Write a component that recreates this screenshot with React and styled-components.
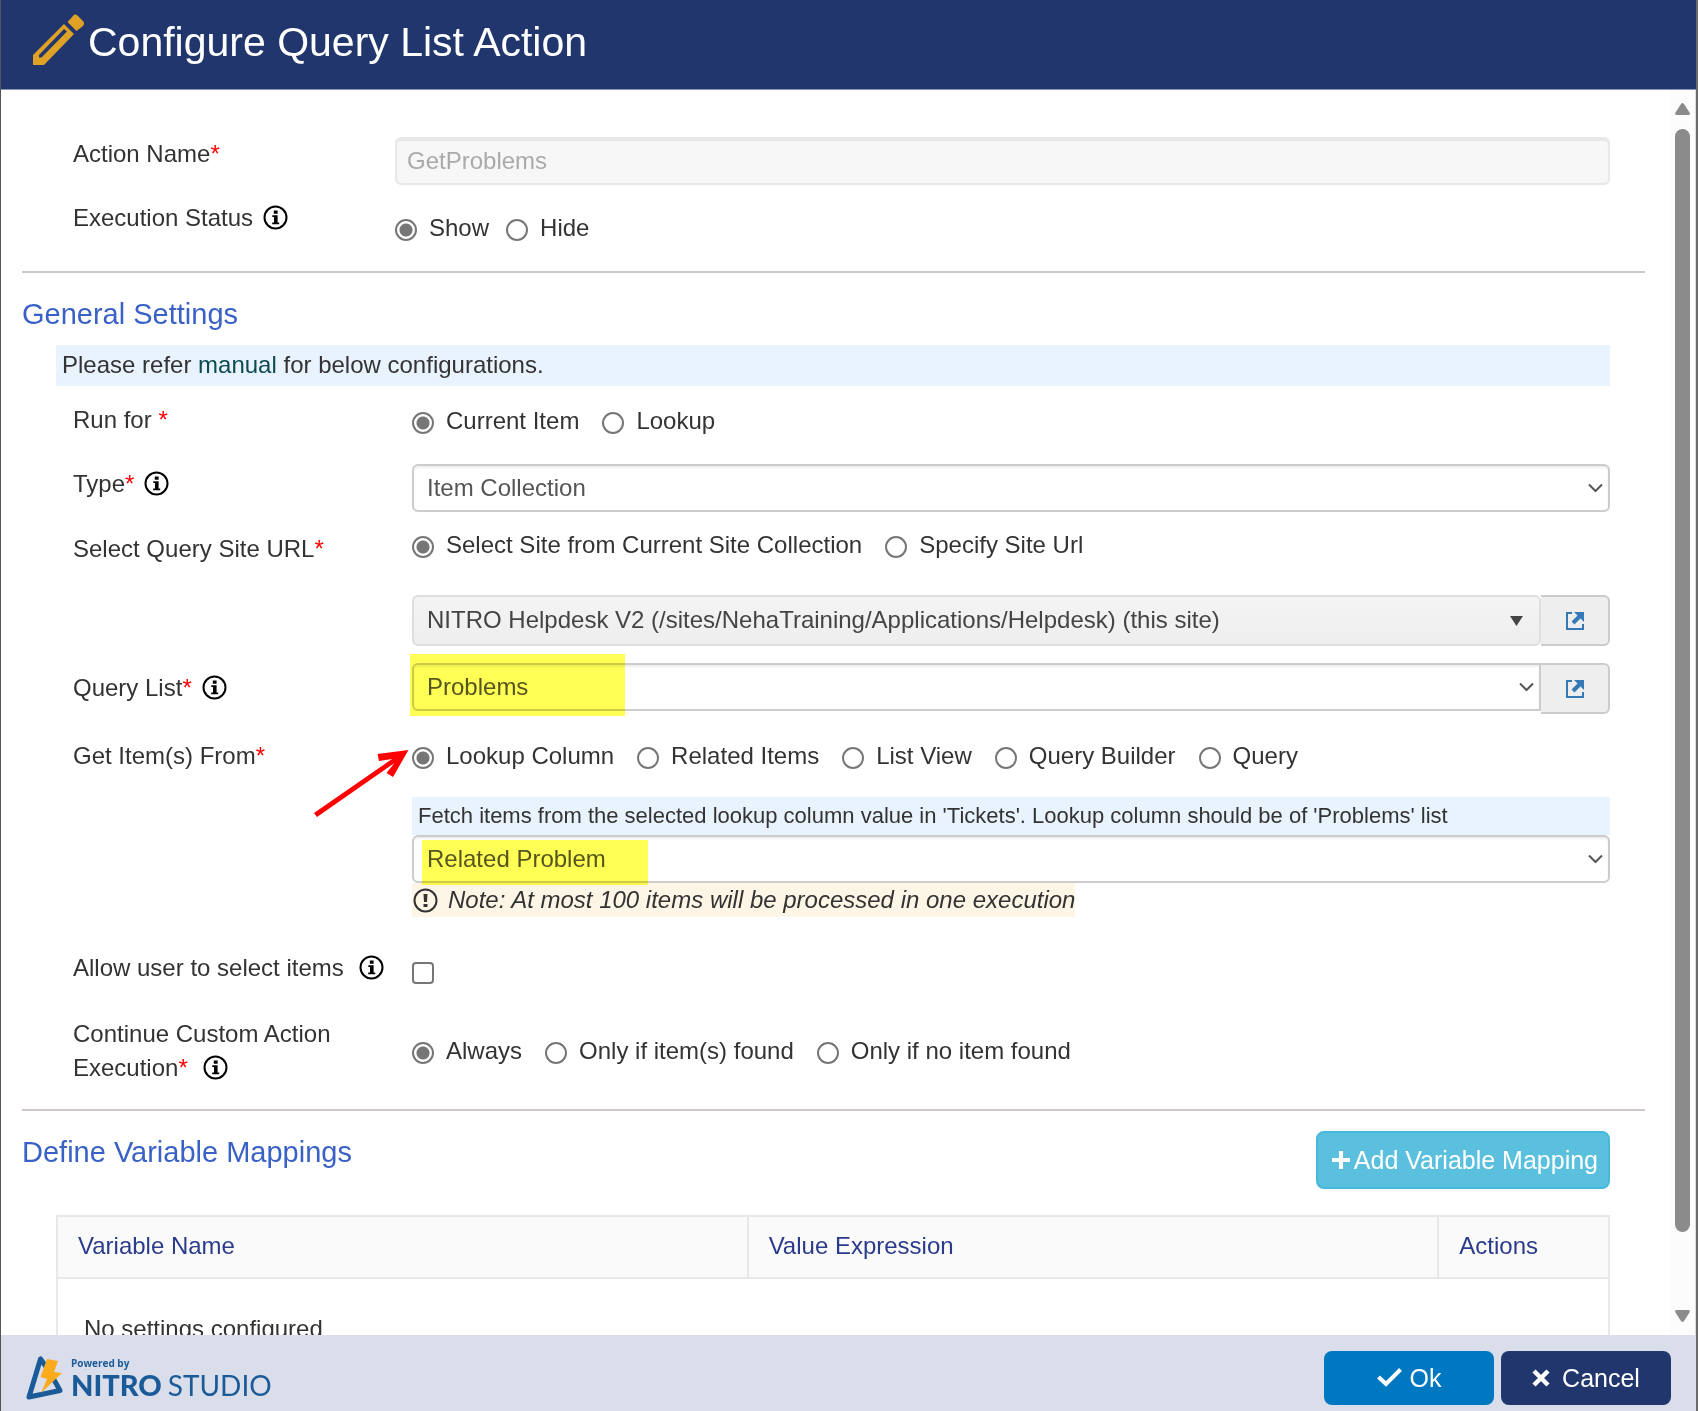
import React from "react";
import styled, { createGlobalStyle, css } from "styled-components";

const GlobalStyle = createGlobalStyle`
  *, *::before, *::after { box-sizing: border-box; }
  body {
    margin: 0;
    background: #fff;
    color: #333;
    font: 24px/34px "Liberation Sans", Arial, sans-serif;
  }
  input, select, button { font: inherit; margin: 0; }
`;

const Dialog = styled.div`
  height: 100vh;
  display: flex;
  flex-direction: column;
  border-left: 1px solid #555;
  border-right: 2px solid #6b6b6b;
`;

const Header = styled.header`
  display: flex;
  align-items: center;
  flex: none;
  height: 90px;
  padding: 0 0 6px 31px;
  background: #20366d;
  border-bottom: 1px solid #8c98b8;
  color: #fff;
`;

const PencilIcon = styled.svg`
  flex: none;
  margin-bottom: 4px;
`;

const Title = styled.h1`
  margin: 0 0 0 3px;
  font-size: 41px;
  line-height: 48px;
  font-weight: 400;
`;

const Main = styled.div`
  flex: 1;
  min-height: 0;
  display: flex;
`;

const Content = styled.main`
  flex: 1;
  min-width: 0;
  overflow-y: auto;
  scrollbar-width: none;
  padding: 47px 25px 0 21px;
`;

const ScrollTrack = styled.div`
  flex: none;
  width: 26px;
  display: flex;
  flex-direction: column;
  align-items: center;
  padding: 13px 0;
  background: #fcfcfc;
  border-right: 1px solid #ddd;
`;

const ScrollSpace = styled.div`
  flex: 1;
  width: 15px;
  margin: 14px 0 13px;
`;

const ScrollThumb = styled.div`
  height: calc(100% * 17 / 18);
  border-radius: 8px;
  background: #8b8b8b;
`;

const Rule = styled.hr`
  margin: ${(p) => p.$top}px 0 0;
  border: 0;
  height: 2px;
  background: #cfc8ca;
`;

const SectionTitle = styled.h2`
  margin: 0;
  padding-top: ${(p) => p.$top}px;
  font-size: 29px;
  line-height: 34px;
  font-weight: 400;
  color: #3a62c6;
`;

const Banner = styled.div`
  padding: 0 35px 0 34px;
`;

const Form = styled.div`
  padding: 0 35px 0 51px;
`;

const Row = styled.div`
  display: grid;
  grid-template-columns: ${(p) => p.$label || 339}px minmax(0, 1fr);
  margin-top: ${(p) => p.$gap || 0}px;
`;

const labelStyle = css`
  display: block;
  padding-top: ${(p) => p.$top || 0}px;
`;
const Label = styled.label`${labelStyle}`;
const Caption = styled.div`
  ${labelStyle}
  padding-right: 20px;
`;

const Required = styled.span`
  color: #f00;
`;

const Field = styled.div`
  padding-top: ${(p) => p.$top || 0}px;
`;

const Options = styled.div`
  display: flex;
  flex-wrap: wrap;
  gap: 0 ${(p) => p.$gap || 23}px;
`;

const Option = styled.label`
  display: flex;
  align-items: center;
  gap: 12px;
`;

const Radio = styled.input.attrs({ type: "radio" })`
  appearance: none;
  width: 22px;
  height: 22px;
  margin-top: 3px;
  border: 2px solid #767676;
  border-radius: 50%;
  background: #fff;
  &:checked {
    background: radial-gradient(circle, #767676 6px, #fff 7px);
  }
`;

const Checkbox = styled.input.attrs({ type: "checkbox" })`
  appearance: none;
  display: block;
  width: 22px;
  height: 22px;
  border: 2px solid #767676;
  border-radius: 4px;
  background: #fff;
`;

const TextBox = styled.input`
  display: block;
  width: 100%;
  height: 48px;
  padding: 0 12px 0 10px;
  border: 2px solid #e8e8e8;
  border-radius: 6px;
  background: #f7f7f7;
  box-shadow: inset 0 2px 1px #e6e6e6;
  color: #aaa;
`;

const SelectBox = styled.div`
  position: relative;
  flex: 1;
  min-width: 0;
`;

const Select = styled.select`
  appearance: none;
  display: block;
  width: 100%;
  height: ${(p) => (p.$shaded ? 51 : 48)}px;
  padding: 0 50px ${(p) => (p.$shaded ? 2 : 0)}px 13px;
  border: 2px solid ${(p) => (p.$shaded ? "#dedede" : "#ccc")};
  border-radius: ${(p) => (p.$joined ? "6px 0 0 6px" : "6px")};
  background: ${(p) => (p.$shaded ? "linear-gradient(#f4f4f4, #eee)" : "#fff")};
  box-shadow: ${(p) => (p.$shaded ? "none" : "inset 0 2px 2px #eee")};
  color: ${(p) => (p.$shaded ? "#444" : "#555")};
`;

const Caret = styled.svg`
  position: absolute;
  top: 50%;
  right: ${(p) => p.$right || 7}px;
  transform: translateY(-50%);
  pointer-events: none;
`;

const Highlight = styled.span`
  position: absolute;
  top: ${(p) => p.$top}px;
  left: ${(p) => p.$left}px;
  width: ${(p) => p.$width}px;
  height: ${(p) => p.$height}px;
  background: #ffff55;
  mix-blend-mode: multiply;
  pointer-events: none;
`;

const InputGroup = styled.div`
  display: flex;
  align-items: flex-start;
  margin-top: ${(p) => p.$gap || 0}px;
`;

const OpenLink = styled.a`
  flex: none;
  display: flex;
  align-items: center;
  justify-content: center;
  width: 69px;
  height: 51px;
  border: 2px solid #ccc;
  border-left: 0;
  border-radius: 0 6px 6px 0;
  background: #eee;
`;

const Hint = styled.p`
  margin: ${(p) => p.$gap}px 0 0;
  padding: 3px 6px 4px;
  background: #e9f3fe;
  font-size: ${(p) => (p.$small ? 22 : 24)}px;
  line-height: ${(p) => (p.$small ? 31 : 34)}px;
`;

const ManualLink = styled.a`
  color: #0c4a50;
  text-decoration: none;
`;

const Note = styled.div`
  display: flex;
  align-items: center;
  gap: 10px;
  width: fit-content;
  padding-left: 1px;
  background: #fdf5e6;
  font-style: italic;
`;

const Anchor = styled.div`
  position: relative;
`;

const Pointer = styled.svg`
  position: absolute;
  left: -99px;
  top: 9px;
  pointer-events: none;
`;

const InfoSvg = styled.svg`
  vertical-align: -4px;
  margin-left: ${(p) => p.$gap}px;
`;

const MappingBar = styled.div`
  display: flex;
  justify-content: space-between;
  align-items: flex-start;
  padding: 20px 35px 0 0;
`;

const AddButton = styled.button`
  display: flex;
  align-items: center;
  gap: 4px;
  height: 58px;
  padding: 0 10px 0 14px;
  border: 2px solid #46b8da;
  border-radius: 8px;
  background: #5bc0de;
  color: #fff;
  font-size: 25px;
`;

const MappingTable = styled.table`
  width: calc(100% - 69px);
  margin: 26px 0 0 34px;
  border-collapse: collapse;
  table-layout: fixed;
  border: 2px solid #e8e8e8;
`;

const HeadCell = styled.th`
  width: ${(p) => p.$width || "auto"};
  height: 62px;
  padding: 0 20px 2px;
  border: 2px solid #e8e8e8;
  background: #fafafa;
  color: #2b3b8c;
  font-weight: 400;
  text-align: left;
`;

const EmptyCell = styled.td`
  height: 102px;
  padding: 0 26px;
`;

const Footer = styled.footer`
  flex: none;
  display: flex;
  align-items: center;
  gap: 7px;
  height: 76px;
  padding: 9px 25px 0 24px;
  background: #d9deea;
`;

const Brand = styled.div`
  display: flex;
  align-items: center;
  gap: 6px;
  margin-right: auto;
  color: #1a5a98;
  font-family: Lato, sans-serif;
`;

const Powered = styled.div`
  padding-top: 2px;
  font: 700 10px/12px "Open Sans", sans-serif;
`;

const Wordmark = styled.div`
  display: flex;
  align-items: baseline;
  gap: 6px;
  font-size: 28px;
  line-height: 32px;
`;

const Strong = styled.strong`
  font-size: 29px;
  font-weight: 900;
`;

const Action = styled.button`
  display: flex;
  align-items: center;
  justify-content: center;
  gap: ${(p) => p.$gap}px;
  width: 170px;
  height: 54px;
  border: 0;
  border-radius: 8px;
  background: ${(p) => p.$color};
  color: #fff;
  font-size: 25px;
`;

const Info = ({ gap = 10 }) => (
  <InfoSvg $gap={gap} width="25" height="25" viewBox="0 0 25 25" role="img" aria-label="Information">
    <circle cx="12.5" cy="12.5" r="11" fill="none" stroke="#000" strokeWidth="2" />
    <path d="M10.8 5.6h3.8v3.2h-3.8zM9.3 10.3h5.3v7.2h1.6v1.8H9.2v-1.8h1.8v-5.4H9.3z" fill="#000" />
  </InfoSvg>
);

const Star = () => <Required aria-hidden="true">*</Required>;

const ChevronCaret = () => (
  <Caret width="15" height="9" viewBox="0 0 15 9">
    <path d="M1 1l6.500 6.500L14 1" fill="none" stroke="#555" strokeWidth="2" />
  </Caret>
);

const RadioSet = ({ name, options, gap, label }) => (
  <Options $gap={gap} role="radiogroup" aria-label={label}>
    {options.map((text, i) => (
      <Option key={text}>
        <Radio name={name} defaultChecked={i === 0} />
        {text}
      </Option>
    ))}
  </Options>
);

const OpenIcon = ({ label }) => (
  <OpenLink href="#" aria-label={label}>
    <svg width="18" height="18" viewBox="0 0 18 18" fill="none" stroke="#337ab7">
      <path d="M6 1H1v16h16v-5" strokeWidth="2" />
      <path d="M7 11l7-7" strokeWidth="4" />
      <path d="M8 0H18v10z" fill="#337ab7" stroke="none" />
    </svg>
  </OpenLink>
);

export default function App() {
  return (
    <>
      <GlobalStyle />
      <Dialog role="dialog" aria-labelledby="dialog-title">
        <Header>
          <PencilIcon width="53" height="52" viewBox="0 0 53 52" fill="#dfa126">
            <path fillRule="evenodd" d="M32 10L42 20L12 51H1V41ZM32 15L7 41V43.500H9.500L35 17.500Z" />
            <path d="M35.500 8L41 2Q43 -.5 45.500 1.500L51 7Q53 9.500 51 12L44.500 17Z" />
          </PencilIcon>
          <Title id="dialog-title">Configure Query List Action</Title>
        </Header>

        <Main>
          <Content>
            <Form>
              <Row $label={322}>
                <Label htmlFor="action-name">Action Name<Star /></Label>
                <TextBox id="action-name" defaultValue="GetProblems" disabled />
              </Row>
              <Row $label={322} $gap={16}>
                <Caption>Execution Status<Info /></Caption>
                <Field $top={10}>
                  <RadioSet name="status" label="Execution Status" options={["Show", "Hide"]} gap={17} />
                </Field>
              </Row>
            </Form>

            <Rule $top={26} />
            <SectionTitle $top={24}>General Settings</SectionTitle>
            <Banner>
              <Hint $gap={14}>
                Please refer <ManualLink href="#manual">manual</ManualLink> for below configurations.
              </Hint>
            </Banner>

            <Form>
              <Row $gap={17}>
                <Caption>Run for <Star /></Caption>
                <Field $top={1}>
                  <RadioSet name="run" label="Run for" options={["Current Item", "Lookup"]} />
                </Field>
              </Row>
              <Row $gap={26}>
                <Label htmlFor="type" $top={3}>Type<Star /><Info /></Label>
                <SelectBox>
                  <Select id="type"><option>Item Collection</option></Select>
                  <ChevronCaret />
                </SelectBox>
              </Row>
              <Row $gap={16}>
                <Label htmlFor="site" $top={4}>Select Query Site URL<Star /></Label>
                <Field>
                  <RadioSet
                    name="site-mode"
                    label="Select Query Site URL"
                    options={["Select Site from Current Site Collection", "Specify Site Url"]}
                  />
                  <InputGroup $gap={33}>
                    <SelectBox>
                      <Select id="site" $shaded>
                        <option>NITRO Helpdesk V2 (/sites/NehaTraining/Applications/Helpdesk) (this site)</option>
                      </Select>
                      <Caret $right={18} width="13" height="10" viewBox="0 0 13 10">
                        <path d="M0 0h13L6.500 10z" fill="#444" />
                      </Caret>
                    </SelectBox>
                    <OpenIcon label="Open site" />
                  </InputGroup>
                </Field>
              </Row>
              <Row $gap={17}>
                <Label htmlFor="list" $top={8}>Query List<Star /><Info /></Label>
                <InputGroup>
                  <SelectBox>
                    <Select id="list" $joined><option>Problems</option></Select>
                    <ChevronCaret />
                    <Highlight $top={-9} $left={-2} $width={215} $height={62} />
                  </SelectBox>
                  <OpenIcon label="Open list" />
                </InputGroup>
              </Row>
              <Row $gap={25}>
                <Label htmlFor="lookup-column">Get Item(s) From<Star /></Label>
                <Field>
                  <Anchor>
                    <RadioSet
                      name="source"
                      label="Get Item(s) From"
                      options={["Lookup Column", "Related Items", "List View", "Query Builder", "Query"]}
                    />
                    <Pointer width="98" height="70" viewBox="0 0 98 70">
                      <path d="M1 65L79 11L66 13L64.500 6L95.500 2L80 29L73.500 25L81.500 15L4 69Z" fill="#f00" />
                    </Pointer>
                  </Anchor>
                  <Hint $gap={24} $small>
                    Fetch items from the selected lookup column value in 'Tickets'. Lookup column should be of 'Problems' list
                  </Hint>
                  <SelectBox>
                    <Select id="lookup-column"><option>Related Problem</option></Select>
                    <ChevronCaret />
                    <Highlight $top={5} $left={10} $width={226} $height={45} />
                  </SelectBox>
                  <Note>
                    <svg width="25" height="25" viewBox="0 0 25 25">
                      <circle cx="12.500" cy="12.500" r="11" fill="none" stroke="#333" strokeWidth="2" />
                      <path d="M10.500 6h4l-.5 8h-3zM10.500 16h4v3h-4z" fill="#333" />
                    </svg>
                    Note: At most 100 items will be processed in one execution
                  </Note>
                </Field>
              </Row>
              <Row $gap={34}>
                <Label htmlFor="allow">Allow user to select items<Info gap={15} /></Label>
                <Field $top={11}><Checkbox id="allow" /></Field>
              </Row>
              <Row $gap={32}>
                <Caption>
                  <span>Continue Custom Action</span> <span>Execution</span><Star /><Info gap={15} />
                </Caption>
                <Field $top={17}>
                  <RadioSet
                    name="continue"
                    label="Continue Custom Action Execution"
                    options={["Always", "Only if item(s) found", "Only if no item found"]}
                  />
                </Field>
              </Row>
            </Form>

            <Rule $top={24} />
            <MappingBar>
              <SectionTitle $top={4}>Define Variable Mappings</SectionTitle>
              <AddButton type="button">
                <svg width="18" height="18" viewBox="0 0 18 18">
                  <path d="M9 0v18M0 9h18" stroke="#fff" strokeWidth="4" />
                </svg>
                Add Variable Mapping
              </AddButton>
            </MappingBar>
            <MappingTable>
              <thead>
                <tr>
                  <HeadCell>Variable Name</HeadCell>
                  <HeadCell>Value Expression</HeadCell>
                  <HeadCell $width="11%">Actions</HeadCell>
                </tr>
              </thead>
              <tbody>
                <tr><EmptyCell colSpan={3}>No settings configured</EmptyCell></tr>
              </tbody>
            </MappingTable>
          </Content>

          <ScrollTrack aria-hidden="true">
            <svg width="15" height="12" viewBox="0 0 15 12">
              <path d="M6 1Q7.500-1 9 1L14.500 9.500Q15.500 12 13.500 12H1.500Q-.5 12 .5 9.500Z" fill="#8b8b8b" />
            </svg>
            <ScrollSpace><ScrollThumb /></ScrollSpace>
            <svg width="15" height="12" viewBox="0 0 15 12">
              <path d="M6 11Q7.500 13 9 11L14.500 2.500Q15.500 0 13.500 0H1.500Q-.5 0 .5 2.500Z" fill="#8b8b8b" />
            </svg>
          </ScrollTrack>
        </Main>

        <Footer>
          <Brand>
            <svg width="40" height="46" viewBox="0 0 40 46">
              <path d="M22 13L15.500 4L4 42L35 35.500L28 23" fill="none" stroke="#1a5a98" strokeWidth="5" strokeLinejoin="round" />
              <path d="M22 4L33 6L29 17L37 18L16 38L22 24L15.500 22Z" fill="#fcab1c" />
            </svg>
            <div>
              <Powered>Powered by</Powered>
              <Wordmark><Strong>NITRO</Strong><span>STUDIO</span></Wordmark>
            </div>
          </Brand>
          <Action type="button" $color="#0078c1" $gap={8}>
            <svg width="25" height="19" viewBox="0 0 25 19">
              <path d="M1.500 9L9 16L23.500 1.500" fill="none" stroke="#fff" strokeWidth="4" />
            </svg>
            Ok
          </Action>
          <Action type="button" $color="#20366d" $gap={12}>
            <svg width="18" height="18" viewBox="0 0 18 18">
              <path d="M2 2l14 14M16 2L2 16" stroke="#fff" strokeWidth="4.500" />
            </svg>
            Cancel
          </Action>
        </Footer>
      </Dialog>
    </>
  );
}
